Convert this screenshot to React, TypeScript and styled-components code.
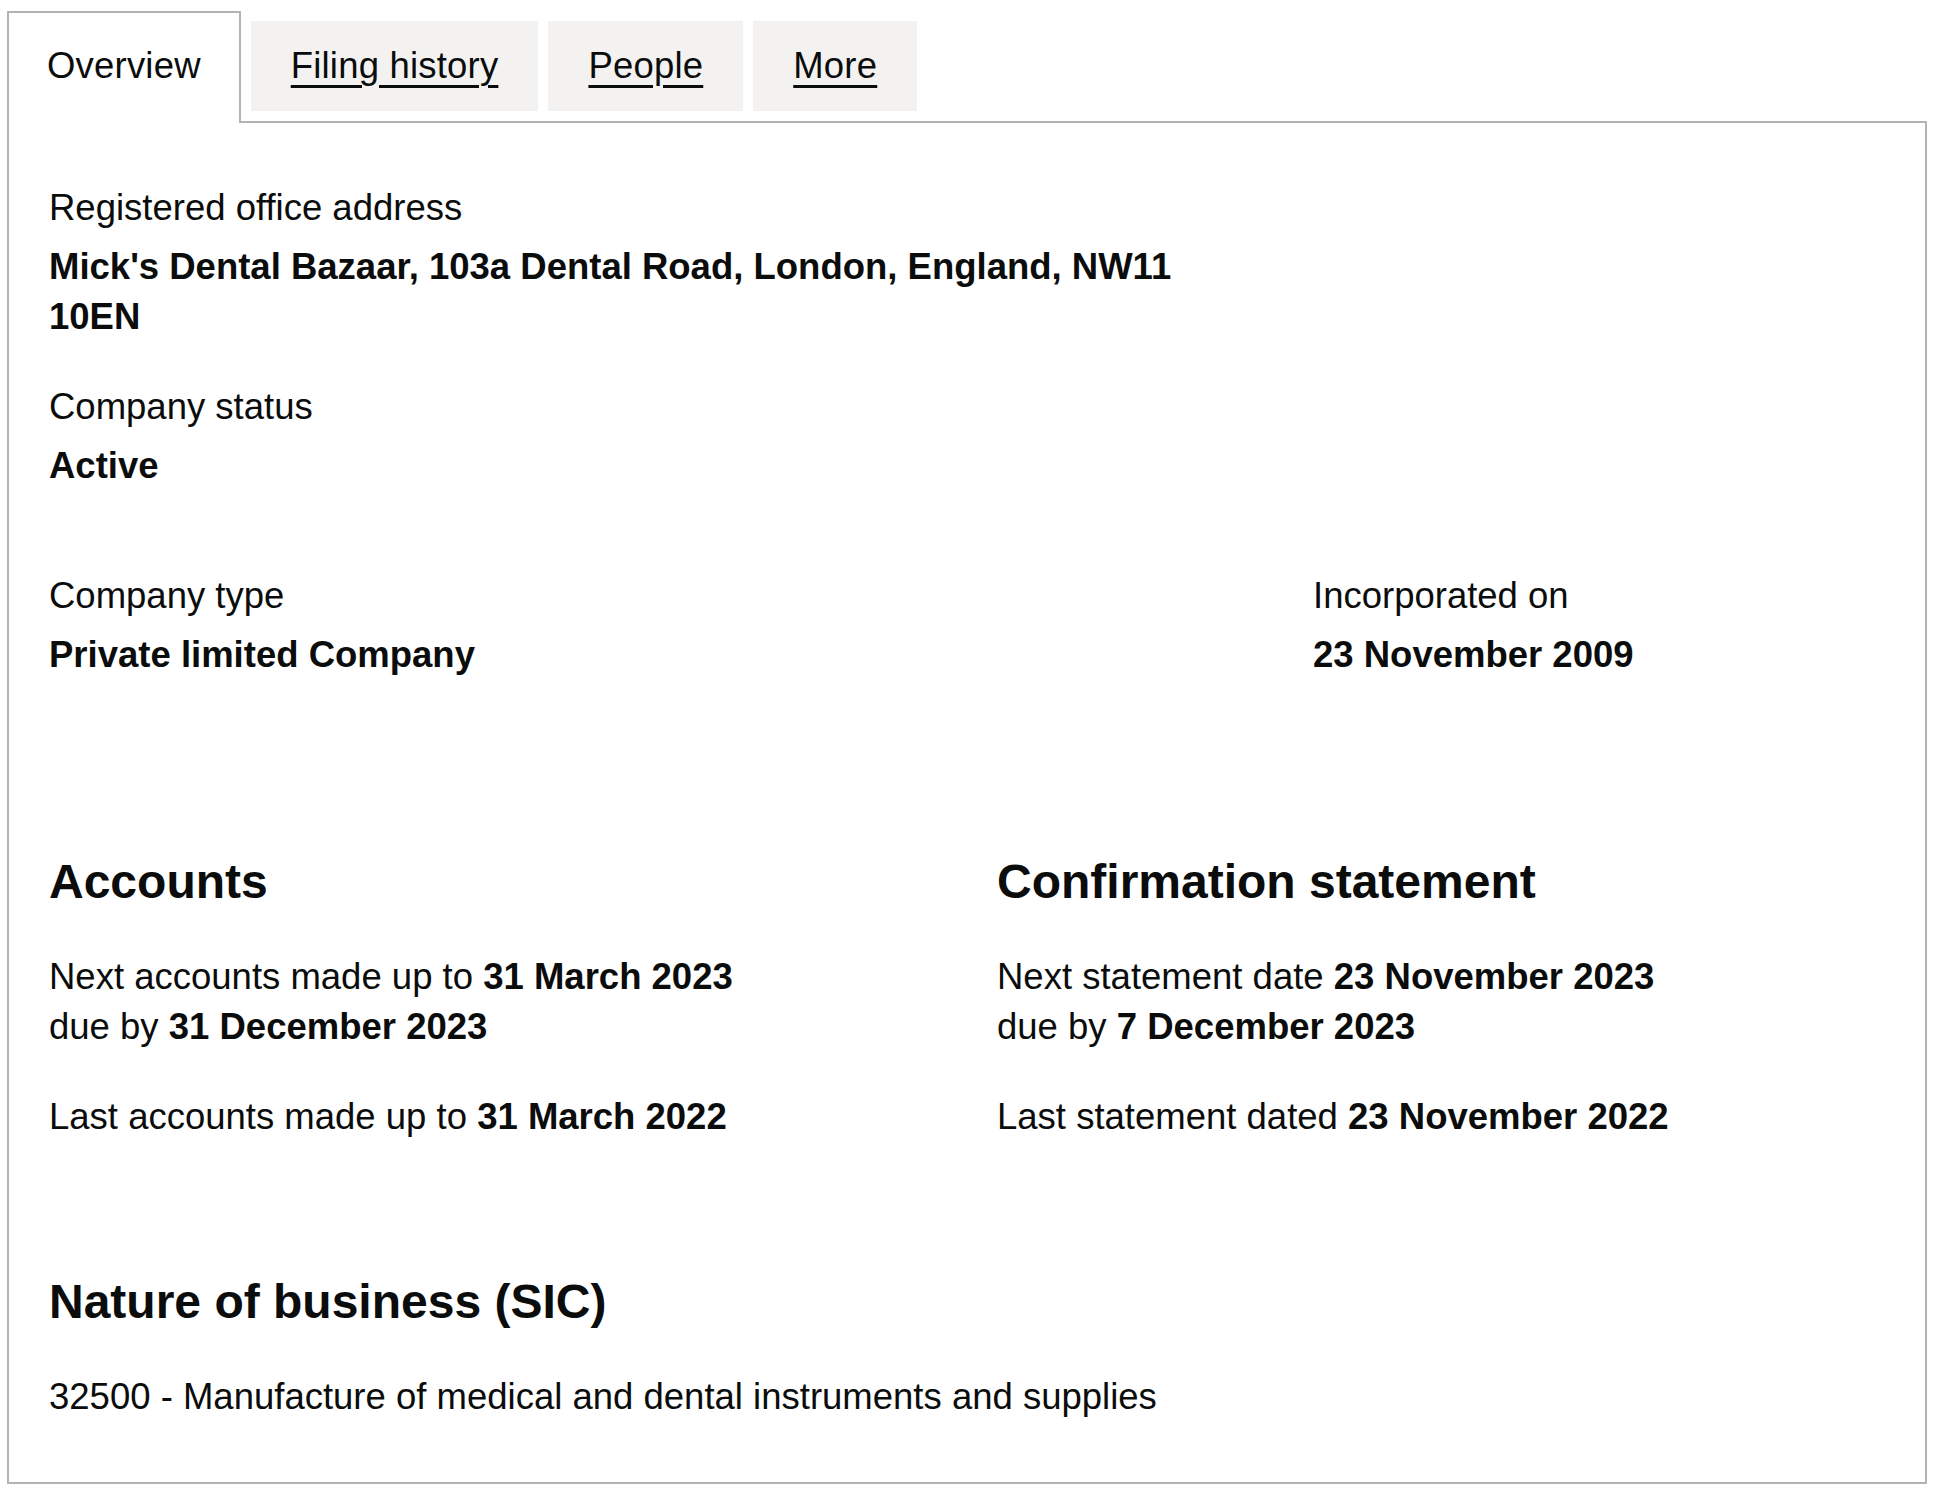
import React from "react";
import styled, { createGlobalStyle, css } from "styled-components";

const GlobalStyle = createGlobalStyle`
  html, body {
    margin: 0;
    padding: 0;
    background: #ffffff;
  }
  body {
    font-family: "Liberation Sans", Arial, sans-serif;
    color: #0b0c0c;
    -webkit-font-smoothing: antialiased;
  }
  *, *::before, *::after {
    box-sizing: border-box;
  }
`;

const BORDER = "#b1b4b6";
const TWO_THIRDS = "calc((100% + 60px) * 2 / 3 - 60px)";

const Page = styled.div`
  padding: 11px 9px 12px 7px;
`;

const TabList = styled.ul`
  list-style: none;
  margin: 0;
  padding: 0;
  display: flex;
  align-items: flex-end;
  border-bottom: 2px solid ${BORDER};
`;

const TabItem = styled.li<{ $selected?: boolean }>`
  margin-right: 10px;
  font-size: 36.5px;
  line-height: 50px;
  ${(p) =>
    p.$selected
      ? css`
          background: #ffffff;
          border: 2px solid ${BORDER};
          border-bottom: 0;
          padding: 28px 38px 32px;
          margin-bottom: -2px;
        `
      : css`
          background: #f3f2f1;
          padding: 20px 40px;
          margin-bottom: 10px;
        `}
`;

const TabLink = styled.a<{ $selected?: boolean }>`
  color: #0b0c0c;
  text-decoration: ${(p) => (p.$selected ? "none" : "underline")};
  text-decoration-thickness: 3px;
  text-underline-offset: 7px;
  letter-spacing: 0.2px;
  cursor: pointer;
`;

const Panel = styled.section`
  border: 2px solid ${BORDER};
  border-top: 0;
  padding: 60px 40px;
`;

const Field = styled.dl<{ $mb?: number; $narrow?: boolean }>`
  margin: 0 0 ${(p) => p.$mb ?? 0}px;
  max-width: ${(p) => (p.$narrow ? TWO_THIRDS : "none")};
`;

const Term = styled.dt`
  font-size: 36.5px;
  line-height: 50px;
  margin: 0;
`;

const Value = styled.dd`
  font-size: 36.5px;
  line-height: 50px;
  font-weight: 700;
  margin: 9px 0 0;
`;

const Row = styled.div<{ $layout: "halves" | "thirds"; $mb?: number }>`
  display: grid;
  column-gap: 60px;
  grid-template-columns: ${(p) =>
    p.$layout === "halves" ? "1fr 1fr" : `${TWO_THIRDS} 1fr`};
  margin-bottom: ${(p) => p.$mb ?? 0}px;
`;

const Heading = styled.h2`
  font-family: "Liberation Sans", Arial, sans-serif;
  font-size: 48px;
  line-height: 60px;
  font-weight: 700;
  margin: 0 0 40px;
`;

const Para = styled.p`
  font-size: 36.5px;
  line-height: 50px;
  margin: 0 0 40px;
  &:last-child {
    margin-bottom: 0;
  }
`;

const Strong = styled.strong`
  font-weight: 700;
`;

const tabs = [
  { label: "Overview", selected: true },
  { label: "Filing history" },
  { label: "People" },
  { label: "More" },
];

export default function App() {
  return (
    <>
      <GlobalStyle />
      <Page>
        <TabList>
          {tabs.map((t) => (
            <TabItem key={t.label} $selected={t.selected}>
              <TabLink $selected={t.selected}>{t.label}</TabLink>
            </TabItem>
          ))}
        </TabList>
        <Panel>
          <Field $mb={40} $narrow>
            <Term>Registered office address</Term>
            <Value>
              Mick's Dental Bazaar, 103a Dental Road, London, England, NW11 10EN
            </Value>
          </Field>
          <Field $mb={80} $narrow>
            <Term>Company status</Term>
            <Value>Active</Value>
          </Field>
          <Row $layout="thirds" $mb={172}>
            <Field>
              <Term>Company type</Term>
              <Value>Private limited Company</Value>
            </Field>
            <Field>
              <Term>Incorporated on</Term>
              <Value>23 November 2009</Value>
            </Field>
          </Row>
          <Row $layout="halves" $mb={130}>
            <div>
              <Heading>Accounts</Heading>
              <Para>
                Next accounts made up to <Strong>31 March 2023</Strong>
                <br />
                due by <Strong>31 December 2023</Strong>
              </Para>
              <Para>
                Last accounts made up to <Strong>31 March 2022</Strong>
              </Para>
            </div>
            <div>
              <Heading>Confirmation statement</Heading>
              <Para>
                Next statement date <Strong>23 November 2023</Strong>
                <br />
                due by <Strong>7 December 2023</Strong>
              </Para>
              <Para>
                Last statement dated <Strong>23 November 2022</Strong>
              </Para>
            </div>
          </Row>
          <Heading>Nature of business (SIC)</Heading>
          <Para>
            32500 - Manufacture of medical and dental instruments and supplies
          </Para>
        </Panel>
      </Page>
    </>
  );
}
